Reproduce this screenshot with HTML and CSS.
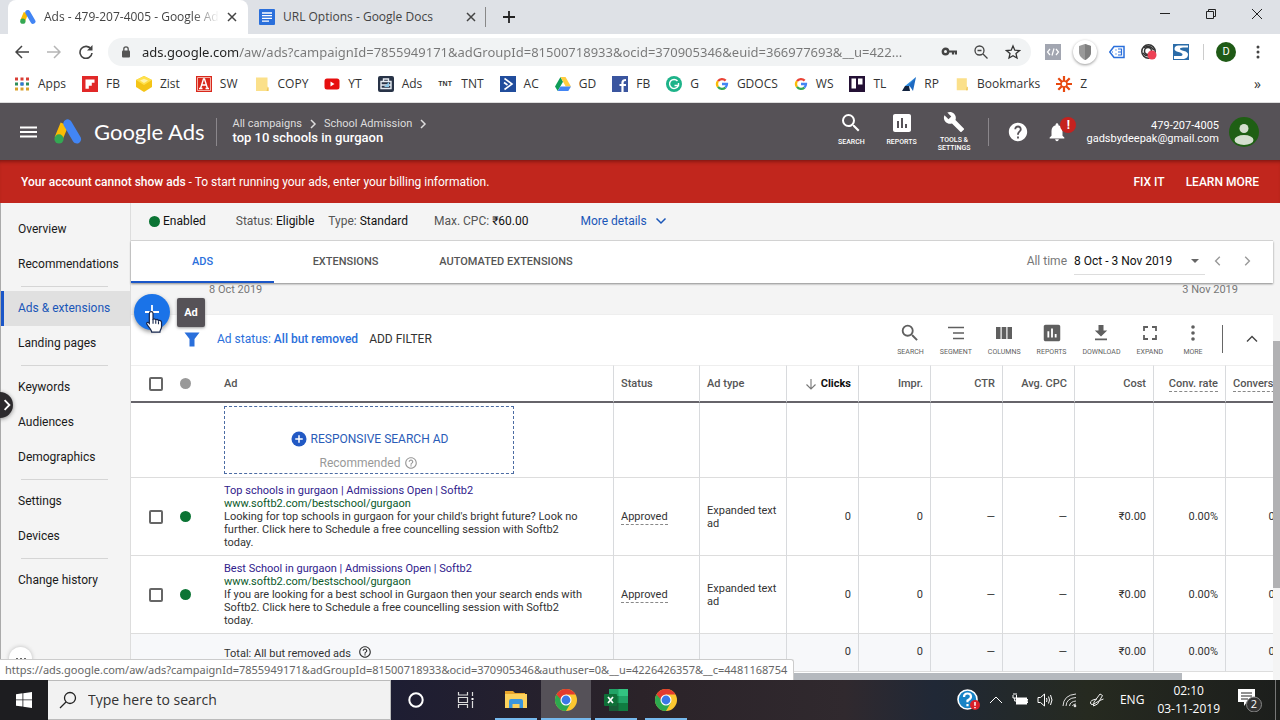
FILE: index.html
```html
<!DOCTYPE html>
<html lang="en">
<head>
<meta charset="utf-8">
<meta name="viewport" content="width=device-width, initial-scale=1">
<title>Ads - 479-207-4005 - Google Ads</title>
<link rel="stylesheet" href="styles.css">
</head>
<body>
<svg class="defs" aria-hidden="true">
  <symbol id="ads-logo" viewBox="0 0 28 25">
    <path d="M10.5 5.2 4.6 19.5" stroke="#fbbc04" stroke-width="8.4"/>
    <path d="M13.6 4.6 22.8 20.2" stroke="#4285f4" stroke-width="8.6" stroke-linecap="round"/>
    <circle cx="5" cy="19.9" r="4.6" fill="#34a853"/>
  </symbol>
  <symbol id="google-g" viewBox="0 0 48 48">
    <path d="M10.2 14.2A17 17 0 0 1 36.5 12.500" fill="none" stroke="#ea4335" stroke-width="8"/>
    <path d="M10.2 33.800A17 17 0 0 1 10.200 14.200" fill="none" stroke="#fbbc05" stroke-width="8"/>
    <path d="M10.200 33.800A17 17 0 0 0 35.500 36.300" fill="none" stroke="#34a853" stroke-width="8"/>
    <path d="M24 24H41A17 17 0 0 1 35.500 36.300" fill="none" stroke="#4285f4" stroke-width="8"/>
  </symbol>
  <symbol id="folder" viewBox="0 0 16 16">
    <path d="M2 1.500h11.500v9l1 1v3.500H2z" fill="#fbe08a"/><path d="M13.500 11.500h1v3.500h-2z" fill="#efc75e"/>
  </symbol>
  <symbol id="chrome" viewBox="0 0 24 24">
    <circle cx="12" cy="12" r="11" fill="#fbc730"/>
    <path d="M12 12 2.470 6.500A11 11 0 0 0 12 23L16.760 14.700z" fill="#2da94f"/>
    <path d="M12 12H7.240L2.470 6.500A11 11 0 0 1 21.530 6.500H12z" fill="#e33b2e"/>
    <circle cx="12" cy="12" r="5.500" fill="#fff"/><circle cx="12" cy="12" r="4.400" fill="#3b78e7"/>
  </symbol>
  <symbol id="help-outline" viewBox="0 0 24 24">
    <path fill="currentColor" d="M11 18h2v-2h-2v2zm1-16C6.480 2 2 6.480 2 12s4.480 10 10 10 10-4.480 10-10S17.520 2 12 2zm0 18c-4.410 0-8-3.590-8-8s3.590-8 8-8 8 3.590 8 8-3.590 8-8 8zm0-14c-2.210 0-4 1.790-4 4h2c0-1.100.9-2 2-2s2 .9 2 2c0 2-3 1.750-3 5h2c0-2.250 3-2.500 3-5 0-2.210-1.790-4-4-4z"/>
  </symbol>
  <symbol id="search" viewBox="0 0 24 24">
    <path fill="currentColor" d="M15.500 14h-.79l-.28-.27A6.470 6.470 0 0 0 16 9.500 6.500 6.500 0 1 0 9.500 16c1.610 0 3.090-.59 4.230-1.570l.27.280v.790l5 4.990L20.490 19l-4.990-5zm-6 0C7.010 14 5 11.990 5 9.500S7.010 5 9.500 5 14 7.010 14 9.500 11.990 14 9.500 14z"/>
  </symbol>
  <symbol id="chart" viewBox="0 0 24 24">
    <path fill="currentColor" d="M19 3H5c-1.100 0-2 .9-2 2v14c0 1.100.9 2 2 2h14c1.100 0 2-.9 2-2V5c0-1.100-.9-2-2-2zM9 17H7v-7h2v7zm4 0h-2V7h2v10zm4 0h-2v-4h2v4z"/>
  </symbol>
  <symbol id="chevron" viewBox="0 0 10 10"><path d="m3 1 4 4-4 4" fill="none" stroke="currentColor" stroke-width="1.500"/></symbol>
  <symbol id="cross" viewBox="0 0 10 10"><path d="m1 1 8 8M9 1 1 9" fill="none" stroke="currentColor" stroke-width="1.500"/></symbol>
</svg>

<header class="browser">
  <div class="tabstrip">
    <div class="tab tab-active">
      <svg class="i16"><use href="#ads-logo"/></svg>
      <span class="tab-title fade">Ads - 479-207-4005 - Google Ads</span>
      <button class="plain" aria-label="Close tab"><svg class="i10"><use href="#cross"/></svg></button>
    </div>
    <div class="tab">
      <svg class="i16" viewBox="0 0 16 16"><rect width="16" height="16" rx="1" fill="#2a6fdb"/><path d="M3 4h10M3 6.700h10M3 9.400h10M3 12.100h7" stroke="#fff" stroke-width="1.300"/></svg>
      <span class="tab-title">URL Options - Google Docs</span>
      <button class="plain" aria-label="Close tab"><svg class="i10"><use href="#cross"/></svg></button>
    </div>
    <button class="plain newtab" aria-label="New tab"><svg class="i12" viewBox="0 0 12 12"><path d="M6 0v12M0 6h12" stroke="#222" stroke-width="1.800"/></svg></button>
    <div class="window-buttons">
      <button class="plain" aria-label="Minimise"><svg class="i12" viewBox="0 0 12 12"><path d="M1 5.500h10" stroke="#222"/></svg></button>
      <button class="plain" aria-label="Restore"><svg class="i12" viewBox="0 0 12 12"><path d="M1.500 3.500h7v7h-7zM3.500 3.500v-2h7v7h-2" fill="none" stroke="#222"/></svg></button>
      <button class="plain" aria-label="Close"><svg class="i12" viewBox="0 0 12 12"><path d="m1 1 10 10M11 1 1 11" stroke="#222"/></svg></button>
    </div>
  </div>

  <div class="navbar">
    <div class="nav-buttons">
      <button class="plain" aria-label="Back"><svg class="i14" viewBox="0 0 14 14"><path d="M14 7H1M7 1 1 7l6 6" fill="none" stroke="#444" stroke-width="1.500"/></svg></button>
      <button class="plain" aria-label="Forward"><svg class="i14" viewBox="0 0 14 14"><path d="M0 7h13M7 1l6 6-6 6" fill="none" stroke="#b5b5b5" stroke-width="1.500"/></svg></button>
      <button class="plain" aria-label="Reload"><svg class="i14" viewBox="0 0 14 14"><path d="M12 4A6 6 0 1 0 13 8" fill="none" stroke="#444" stroke-width="1.600"/><path d="M13.500 0v5.500H8z" fill="#444"/></svg></button>
    </div>
    <div class="omnibox">
      <svg class="i12" viewBox="0 0 12 12"><rect x="2" y="4.500" width="8" height="7" rx="1" fill="#555"/><path d="M3.800 5V3a2.200 2.200 0 0 1 4.400 0v2" fill="none" stroke="#555" stroke-width="1.300"/></svg>
      <input class="url" type="text" aria-label="Address" value="ads.google.com/aw/ads?campaignId=7855949171&amp;adGroupId=81500718933&amp;ocid=370905346&amp;euid=366977693&amp;__u=422...">
      <button class="plain" aria-label="Passwords"><svg class="i16" viewBox="0 0 16 16"><circle cx="4.500" cy="7.500" r="2.700" fill="none" stroke="#444" stroke-width="2.400"/><path d="M7 7.500h8v3M12 7.500v3" fill="none" stroke="#444" stroke-width="2.200"/></svg></button>
      <button class="plain" aria-label="Zoom"><svg class="i16" viewBox="0 0 16 16"><circle cx="6.500" cy="6.500" r="4.500" fill="none" stroke="#444" stroke-width="1.300"/><path d="m10 10 4.500 4.500M4.500 6.500h4" stroke="#444" stroke-width="1.300"/></svg></button>
      <button class="plain" aria-label="Bookmark this page"><svg class="i16" viewBox="0 0 16 16"><path d="m8 2 1.800 4.200 4.700.4-3.500 3 1 4.400-4-2.300L4 14l1-4.400-3.500-3 4.700-.4z" fill="none" stroke="#333" stroke-width="1.300"/></svg></button>
    </div>
    <div class="extensions">
      <svg class="i16" viewBox="0 0 16 16"><rect width="16" height="16" fill="#a2a6b1"/><path d="M5 5 2.500 8 5 11M11 5l2.500 3L11 11M9 4.500l-2 7" fill="none" stroke="#fff" stroke-width="1.200"/></svg>
      <span class="shield"><svg class="i16" viewBox="0 0 16 16"><path d="m8 0 6 2v6c0 4-3 6.500-6 8-3-1.500-6-4-6-8V2z" fill="#999"/><path d="m8 0 6 2v6c0 4-3 6.500-6 8z" fill="#7f7f7f"/></svg></span>
      <svg class="i16" viewBox="0 0 16 16"><path d="M5 2.500h10v11H5L.8 8z" fill="#fff" stroke="#2a6fdb" stroke-width="1.500"/><path d="M7 5.500v1M7 9.500v1M9 5h3.500v6H9M9 8h3.500M3 8h1" fill="none" stroke="#2a6fdb" stroke-width="1.200"/></svg>
      <svg class="i16" viewBox="0 0 16 16"><g fill="none" stroke="#333" stroke-width="1.500"><circle cx="7.500" cy="7.500" r="6.700"/><circle cx="7" cy="7" r="3.500"/><path d="M3 4q5-4 10 2M2 9q3 4 7 2"/></g><circle cx="11" cy="11" r="4.500" fill="#ee4155"/></svg>
      <svg class="i16" viewBox="0 0 16 16"><rect width="16" height="16" fill="#2b6ca8"/><path d="M15 1.500H5.500Q1.500 1.500 1.500 5q0 2 4 3t4 2.500q0 1.500-3 1.500H1v3h10q4-1 4-4.500 0-2.500-4-3.500T7 5q0-1.500 3-1.500h5z" fill="#fff"/></svg>
      <span class="bar"></span>
      <button class="profile" aria-label="Profile">D</button>
      <button class="plain" aria-label="Menu"><svg class="i16" viewBox="0 0 16 16"><g fill="#444"><circle cx="8" cy="3" r="1.500"/><circle cx="8" cy="8" r="1.500"/><circle cx="8" cy="13" r="1.500"/></g></svg></button>
    </div>
  </div>

  <nav class="bookmarks" aria-label="Bookmarks">
    <a href="#"><svg class="i16" viewBox="0 0 16 16"><path d="M1 3h14" stroke="#d93e35" stroke-width="3" stroke-dasharray="3 2.500"/><path d="M1 8h14" stroke="#2f8e5b" stroke-width="3" stroke-dasharray="3 2.500"/><path d="M1 13h14" stroke="#d9a12c" stroke-width="3" stroke-dasharray="3 2.500"/><path d="M6.500 6.500h3v3h-3z" fill="#3273dc"/></svg>Apps</a>
    <a href="#"><svg class="i16" viewBox="0 0 16 16"><path d="M0 0h16v16H0z" fill="#e12828"/><path d="M3.500 3.500h9v3.200H9.800v3H6.800v3H3.500z" fill="#fff"/></svg>FB</a>
    <a href="#"><svg class="i16" viewBox="0 0 16 16"><path d="m8 0 8 4v7l-8 5-8-5V4z" fill="#f4c416"/><path d="m8 0 8 4-8 5-8-5z" fill="#ffe04a"/><path d="m4 4.500 4-1.800 4 1.800-4 2.500z" fill="#fff4ae"/></svg>Zist</a>
    <a href="#"><svg class="i16" viewBox="0 0 16 16"><path d="M0 0h16v16H0z" fill="#d9281c"/><path d="M1.500 1.500h13v13h-13z" fill="none" stroke="#f3b1a5"/><path d="m4.500 12.500 3-9.500h1l3 9.500M3 12.500h3.500m3 0H13M5.500 9h5" fill="none" stroke="#fff" stroke-width="1.400"/></svg>SW</a>
    <a href="#"><svg class="i16"><use href="#folder"/></svg>COPY</a>
    <a href="#"><svg class="i16" viewBox="0 0 16 16"><rect y="2.500" x=".5" width="15" height="11" rx="2.500" fill="#e60f0f"/><path d="m6.500 5.500 4 2.500-4 2.500z" fill="#fff"/></svg>YT</a>
    <a href="#"><svg class="i16" viewBox="0 0 16 16"><rect width="16" height="16" rx="2" fill="#283347"/><path d="M3 5.500h10v7H3zM5.500 5V3h5v2M3 9h10" fill="none" stroke="#e6ecf3" stroke-width="1.400"/><path d="m6 11 5-5v5z" fill="#8dc7e8"/></svg>Ads</a>
    <a href="#"><span class="tnt">TNT</span>TNT</a>
    <a href="#"><svg class="i16" viewBox="0 0 16 16"><path d="M0 0h16v16H0z" fill="#214d9c"/><path d="m4.500 2.500 7.500 5.500-7.500 5.500M4 6.500 7.500 9" fill="none" stroke="#fff" stroke-width="1.600"/></svg>AC</a>
    <a href="#"><svg class="i16" viewBox="0 0 16 16"><path d="M5.500 1 0 10.500l2.700 4.500L8 5.700z" fill="#0f9d58"/><path d="M5.500 1h5L16 10.500h-5.300z" fill="#ffcd40"/><path d="M16 10.500H5.500L2.700 15h10.600z" fill="#4285f4"/></svg>GD</a>
    <a href="#"><svg class="i16" viewBox="0 0 16 16"><path d="M0 0h16v16H0z" fill="#3a559f"/><path d="M10.500 16V6.500Q10.500 4 14 4M7.500 9H14" fill="none" stroke="#fff" stroke-width="2.200"/></svg>FB</a>
    <a href="#"><svg class="i16" viewBox="0 0 16 16"><circle cx="8" cy="8" r="8" fill="#1db389"/><path d="M11.500 5A4.500 4.500 0 1 0 12.300 9.500H8.500M12.500 7v3.500" fill="none" stroke="#fff" stroke-width="1.400"/></svg>G</a>
    <a href="#"><svg class="i14"><use href="#google-g"/></svg>GDOCS</a>
    <a href="#"><svg class="i14"><use href="#google-g"/></svg>WS</a>
    <a href="#"><svg class="i16" viewBox="0 0 16 16"><path d="M0 0h16v16H0z" fill="#241135"/><path d="M2.500 2.500h4.500v10H2.500zM9 2.500h4.500v6H9z" fill="#fff"/></svg>TL</a>
    <a href="#"><svg class="i14" viewBox="0 0 14 14"><path d="M14 0 3 9l4 1z" fill="#2a8be0"/><path d="M14 0 7 8l4 6z" fill="#1d69c1"/><path d="M3 9 0 14h8l-1-5z" fill="#12233f"/></svg>RP</a>
    <a href="#"><svg class="i14"><use href="#folder"/></svg>Bookmarks</a>
    <a href="#"><svg class="i16" viewBox="0 0 16 16"><path d="M8 0v5M8 11v5M0 8h5M11 8h5M2.300 2.300l3.500 3.500M10.200 10.200l3.500 3.500M13.700 2.300l-3.500 3.500M5.800 10.200l-3.500 3.500" stroke="#e8490f" stroke-width="2.200"/><circle cx="8" cy="8" r="3" fill="none" stroke="#e8490f" stroke-width="1.500"/></svg>Z</a>
    <button class="plain more-bookmarks" aria-label="More bookmarks">»</button>
  </nav>
</header>

<header class="app-header">
  <button class="plain" aria-label="Main menu"><svg class="burger" viewBox="0 0 17 12"><path d="M0 1.500h17M0 6h17M0 10.500h17" stroke="#fff" stroke-width="2"/></svg></button>
  <a class="brand" href="#"><svg class="brand-logo"><use href="#ads-logo"/></svg>Google Ads</a>
  <nav class="crumbs" aria-label="Breadcrumb">
    <div class="crumb-row"><a href="#">All campaigns</a><svg class="i10"><use href="#chevron"/></svg><a href="#">School Admission</a><svg class="i10"><use href="#chevron"/></svg></div>
    <strong>top 10 schools in gurgaon</strong>
  </nav>
  <div class="header-tools">
    <button class="tool"><svg class="i24"><use href="#search"/></svg>SEARCH</button>
    <button class="tool"><svg class="i24"><use href="#chart"/></svg>REPORTS</button>
    <button class="tool"><svg class="i22" viewBox="0 0 24 24"><path fill="#fff" d="m22.700 19-9.100-9.100c.9-2.300.4-5-1.500-6.900-2-2-5-2.400-7.400-1.300L9 6 6 9 1.600 4.700C.4 7.100.9 10.100 2.900 12.100c1.900 1.900 4.600 2.400 6.900 1.500l9.100 9.100c.4.400 1 .4 1.400 0l2.300-2.300c.5-.4.500-1.100.1-1.400z"/></svg>TOOLS &amp;<br>SETTINGS</button>
  </div>
  <div class="header-account">
    <button class="plain" aria-label="Help"><svg class="i22" viewBox="0 0 24 24"><path fill="#fff" d="M12 2C6.480 2 2 6.480 2 12s4.480 10 10 10 10-4.480 10-10S17.520 2 12 2zm1 17h-2v-2h2v2zm2.070-7.750-.9.920C13.450 12.900 13 13.500 13 15h-2v-.5c0-1.100.45-2.100 1.170-2.830l1.240-1.260c.37-.36.59-.86.59-1.410 0-1.100-.9-2-2-2s-2 .9-2 2H8c0-2.210 1.790-4 4-4s4 1.790 4 4c0 .88-.36 1.680-.93 2.250z"/></svg></button>
    <button class="plain bell" aria-label="Notifications"><svg class="i22" viewBox="0 0 24 24"><path fill="#fff" d="M12 22c1.100 0 2-.9 2-2h-4c0 1.100.9 2 2 2zm6-6v-5c0-3.070-1.640-5.640-4.500-6.320V4c0-.83-.67-1.500-1.500-1.500s-1.500.67-1.500 1.500v.680C7.630 5.360 6 7.920 6 11v5l-2 2v1h16v-1l-2-2z"/></svg><span class="badge">!</span></button>
    <div class="account"><span>479-207-4005</span><span>gadsbydeepak@gmail.com</span></div>
    <svg class="avatar" viewBox="0 0 30 30"><circle cx="15" cy="15" r="15" fill="#1f5f14"/><circle cx="15" cy="11.500" r="4.500" fill="#d4dfce"/><ellipse cx="15" cy="23" rx="9.500" ry="5" fill="#d4dfce"/></svg>
  </div>
</header>

<section class="alert">
  <p><b>Your account cannot show ads</b> - To start running your ads, enter your billing information.</p>
  <a href="#">FIX IT</a><a href="#">LEARN MORE</a>
</section>

<div class="workspace">
  <nav class="sidebar" aria-label="Sections">
    <a href="#">Overview</a><a href="#">Recommendations</a><hr>
    <a href="#" class="current">Ads &amp; extensions</a><a href="#">Landing pages</a><hr>
    <a href="#">Keywords</a><a href="#">Audiences</a><a href="#">Demographics</a><hr>
    <a href="#">Settings</a><a href="#">Devices</a><hr>
    <a href="#">Change history</a>
    <button class="expander" aria-label="Expand navigation"><svg class="i12" viewBox="0 0 10 10"><path d="m3 1 4 4-4 4" fill="none" stroke="#fff" stroke-width="1.500"/></svg></button>
    <button class="dots" aria-label="More"><svg class="i12" viewBox="0 0 12 12"><g fill="#333"><circle cx="2" cy="6" r="1"/><circle cx="6" cy="6" r="1"/><circle cx="10" cy="6" r="1"/></g></svg></button>
  </nav>

  <main class="main">
    <div class="status-row">
      <span class="enabled"><i class="dot"></i>Enabled</span>
      <span class="st-status">Status: <b>Eligible</b></span>
      <span class="st-type">Type: <b>Standard</b></span>
      <span class="st-cpc">Max. CPC: <b>₹60.00</b></span>
      <a href="#">More details<svg class="i12" viewBox="0 0 12 12"><path d="m1.500 3.500 4.500 4.500 4.500-4.500" fill="none" stroke="currentColor" stroke-width="1.500"/></svg></a>
    </div>
    <div class="view-tabs">
      <button class="view-tab selected">ADS</button>
      <button class="view-tab">EXTENSIONS</button>
      <button class="view-tab auto">AUTOMATED EXTENSIONS</button>
      <div class="range">
        <label for="range">All time</label>
        <span class="range-select"><select id="range"><option>8 Oct - 3 Nov 2019</option></select><svg class="i10" viewBox="0 0 10 10"><path d="M1 3h8L5 7z" fill="#666"/></svg></span>
        <button class="plain" aria-label="Previous period"><svg class="i14 flip" viewBox="0 0 10 10"><path d="m3 2 3 3-3 3" fill="none" stroke="#999"/></svg></button>
        <button class="plain" aria-label="Next period"><svg class="i14" viewBox="0 0 10 10"><path d="m3 2 3 3-3 3" fill="none" stroke="#999"/></svg></button>
      </div>
    </div>
    <div class="chart-axis"><span>8 Oct 2019</span><span>3 Nov 2019</span></div>

    <section class="card">
      <div class="filter-bar">
        <svg class="i16" viewBox="0 0 16 16"><path d="M.5 1.500h15L10.500 8v7.500h-5V8z" fill="#2a6fdb"/></svg>
        <button class="plain filter">Ad status: <b>All but removed</b></button>
        <button class="plain add-filter">ADD FILTER</button>
        <div class="table-tools">
          <button class="mini"><svg class="i22"><use href="#search"/></svg>SEARCH</button>
          <button class="mini"><svg class="i22" viewBox="0 0 22 22"><path d="M3 5.500h16M8 11h11M8 16.500h11" stroke="#5f5f5f" stroke-width="1.700"/></svg>SEGMENT</button>
          <button class="mini"><svg class="i22" viewBox="0 0 22 22"><path d="M3 5h4.500v12H3zM8.700 5h4.600v12H8.700zM14.500 5H19v12h-4.500z" fill="#5f5f5f"/></svg>COLUMNS</button>
          <button class="mini"><svg class="i22"><use href="#chart"/></svg>REPORTS</button>
          <button class="mini"><svg class="i22" viewBox="0 0 22 22"><path d="M8.500 3h5v5.500h3.700L11 14.500l-6.200-6h3.700zM5 16.500h12v1.700H5z" fill="#5f5f5f"/></svg>DOWNLOAD</button>
          <button class="mini"><svg class="i22" viewBox="0 0 22 22"><path d="M5 9V5h4M13 5h4v4M17 13v4h-4M9 17H5v-4" fill="none" stroke="#5f5f5f" stroke-width="1.800"/></svg>EXPAND</button>
          <button class="mini more"><svg class="i22" viewBox="0 0 22 22"><g fill="#5f5f5f"><circle cx="11" cy="5" r="1.800"/><circle cx="11" cy="11" r="1.800"/><circle cx="11" cy="17" r="1.800"/></g></svg>MORE</button>
        </div>
        <button class="collapse" aria-label="Collapse"><svg class="i12" viewBox="0 0 12 12"><path d="m1 8.500 5-5 5 5" fill="none" stroke="#444" stroke-width="1.400"/></svg></button>
      </div>

      <table class="ads">
        <colgroup><col class="c-check"><col class="c-dot"><col><col class="c-status"><col class="c-type"><col class="c-num"><col class="c-num"><col class="c-num"><col class="c-num"><col class="c-cost"><col class="c-num"><col class="c-num"></colgroup>
        <thead>
          <tr><th><input type="checkbox" aria-label="Select all"></th><th class="nb"><i class="dot grey"></i></th><th class="nb ad">Ad</th><th>Status</th><th>Ad type</th><th class="n sorted"><svg class="i12" viewBox="0 0 12 12"><path d="M6 1v10M1.500 6.500 6 11l4.500-4.500" fill="none" stroke="#777" stroke-width="1.100"/></svg>Clicks</th><th class="n">Impr.</th><th class="n">CTR</th><th class="n">Avg. CPC</th><th class="n">Cost</th><th class="n"><span class="hint">Conv. rate</span></th><th class="n"><span class="hint">Conversions</span></th></tr>
        </thead>
        <tbody>
          <tr class="suggest"><td></td><td class="nb"></td><td class="nb ad"><div class="suggestion"><button class="plain rsa"><svg class="i18" viewBox="0 0 24 24"><circle cx="12" cy="12" r="10" fill="#2259c4"/><path d="M12 7v10M7 12h10" stroke="#fff" stroke-width="2"/></svg>RESPONSIVE SEARCH AD</button><span class="rec">Recommended <svg class="i14"><use href="#help-outline"/></svg></span></div></td><td></td><td></td><td></td><td></td><td></td><td></td><td></td><td></td><td></td></tr>
          <tr class="item"><td><input type="checkbox" aria-label="Select Top schools in gurgaon"></td><td class="nb"><i class="dot"></i></td><td class="nb ad"><a href="#">Top schools in gurgaon | Admissions Open | Softb2</a><span class="site">www.softb2.com/bestschool/gurgaon</span>Looking for top schools in gurgaon for your child's bright future? Look no further. Click here to Schedule a free councelling session with Softb2 today.</td><td><span class="hint">Approved</span></td><td>Expanded text ad</td><td class="n">0</td><td class="n">0</td><td class="n">—</td><td class="n">—</td><td class="n">₹0.00</td><td class="n">0.00%</td><td class="n">0.00</td></tr>
          <tr class="item"><td><input type="checkbox" aria-label="Select Best School in gurgaon"></td><td class="nb"><i class="dot"></i></td><td class="nb ad"><a href="#">Best School in gurgaon | Admissions Open | Softb2</a><span class="site">www.softb2.com/bestschool/gurgaon</span>If you are looking for a best school in Gurgaon then your search ends with Softb2. Click here to Schedule a free councelling session with Softb2 today.</td><td><span class="hint">Approved</span></td><td>Expanded text ad</td><td class="n">0</td><td class="n">0</td><td class="n">—</td><td class="n">—</td><td class="n">₹0.00</td><td class="n">0.00%</td><td class="n">0.00</td></tr>
        </tbody>
        <tfoot>
          <tr><td></td><td class="nb"></td><td class="nb ad total">Total: All but removed ads <svg class="i14"><use href="#help-outline"/></svg></td><td></td><td></td><td class="n">0</td><td class="n">0</td><td class="n">—</td><td class="n">—</td><td class="n">₹0.00</td><td class="n">0.00%</td><td class="n">0.00</td></tr>
        </tfoot>
      </table>
      <div class="h-scroll"><span></span></div>
    </section>
    <button class="fab" aria-label="New ad"><svg class="i14" viewBox="0 0 14 14"><path d="M7 0v14M0 7h14" stroke="#fff" stroke-width="1.800"/></svg></button>
    <span class="tip">Ad</span>
    <svg class="pointer" viewBox="0 0 18 22"><path d="M5.500 1.500c1 0 1.700.7 1.700 1.700v5.300c.8-.5 2-.3 2.500.5.900-.5 2-.2 2.500.7 1-.5 2.800 0 2.800 1.600v4c0 2-1.500 3.200-1.500 5H6c0-2-3-4.800-4.500-7.300-.8-1.300 1-2.500 2.300-.8V3.200c0-1 .7-1.700 1.700-1.700z" fill="#fff" stroke="#16264d" stroke-width="1.100"/><path d="M9.700 9.500v3M12.200 10.200V13M7.200 8.500v4" stroke="#16264d"/></svg>
  </main>
  <div class="v-scroll"><span></span></div>
  <div class="link-status">https://ads.google.com/aw/ads?campaignId=7855949171&amp;adGroupId=81500718933&amp;ocid=370905346&amp;authuser=0&amp;__u=4226426357&amp;__c=4481168754</div>
</div>

<footer class="taskbar">
  <button class="start" aria-label="Start"><svg class="i16" viewBox="0 0 16 16"><path d="M0 2.300 6.500 1.300v6.200H0zM7.300 1.200 16 0v7.500H7.300zM0 8.300h6.500v6.300L0 13.700zM7.300 8.300H16V16l-8.700-1.200z" fill="#fff"/></svg></button>
  <div class="task-search"><svg class="i18" viewBox="0 0 18 18"><circle cx="11" cy="7" r="5.500" fill="none" stroke="#222" stroke-width="1.300"/><path d="m7 11-6 6" stroke="#222" stroke-width="1.300"/></svg><input type="text" aria-label="Search Windows" placeholder="Type here to search"></div>
  <button class="task" aria-label="Cortana"><svg class="i16" viewBox="0 0 16 16"><circle cx="8" cy="8" r="6.700" fill="none" stroke="#fff" stroke-width="2"/></svg></button>
  <button class="task" aria-label="Task view"><svg class="i18" viewBox="0 0 18 18"><path d="M1.500 1v3h9V1M1.500 17v-3.500h9V17M1.500 6.500h9v5h-9zM15.500 1v4M15.500 10v7" fill="none" stroke="#ddd" stroke-width="1.200"/><path d="M14.500 7h2v2h-2z" fill="#fff"/></svg></button>
  <button class="task open" aria-label="File Explorer"><svg class="i22" viewBox="0 0 22 22"><path d="M0 2h8l2 2h10v4H0z" fill="#e8a52b"/><path d="M0 5h22v14H0z" fill="#fcd25c"/><path d="M4 19v-7q0-2 2-2h10q2 0 2 2v7h-3.500v-4h-7v4z" fill="#3a96dd"/></svg></button>
  <button class="task open active" aria-label="Chrome"><svg class="i24"><use href="#chrome"/></svg></button>
  <button class="task open" aria-label="Excel"><svg class="i24" viewBox="0 0 24 24"><path d="M5 1h19v22H5z" fill="#21a366"/><path d="M14.500 1H24v7h-9.500z" fill="#33c481"/><path d="M5 8h9.500v7H5zM5 15h19v8H5z" fill="#107c41"/><path d="M5 15h9.500v8H5z" fill="#185c37"/><rect y="6" width="13" height="12" rx="1" fill="#0f7038"/><path d="m4 9 5 6M9 9l-5 6" stroke="#fff" stroke-width="1.700"/></svg></button>
  <button class="task open" aria-label="Chrome, second profile"><svg class="i24"><use href="#chrome"/></svg></button>
  <div class="tray">
    <svg class="i24" viewBox="0 0 24 24"><circle cx="11.500" cy="11.500" r="9.500" fill="#1783c6" stroke="#fff" stroke-width="1.600"/><path d="M8 9q0-3.500 3.500-3.500T15 8.800q0 2-3.500 3.700v1.800M11.500 16v2.200" fill="none" stroke="#fff" stroke-width="2.200"/><circle cx="19" cy="17" r="5" fill="#d9202a"/><path d="M19 14v3.800M19 19v1.300" stroke="#fff" stroke-width="1.500"/></svg>
    <svg class="i14" viewBox="0 0 14 14"><path d="m1 10 6-6 6 6" fill="none" stroke="#fff"/></svg>
    <svg class="i16" viewBox="0 0 16 16"><path d="M4 5.500h11v7H4z" fill="#fff"/><path d="M15 7.500h1v3h-1zM1 3v3h3.500V3M2 3V1M4 3V1M2.700 6v3h2" fill="none" stroke="#fff"/></svg>
    <svg class="i16" viewBox="0 0 16 16"><path d="M1 5.500h2.500l4-3.500v12l-4-3.500H1zM9.500 6q1 2 0 4M11.500 4.500q2 3.500 0 7M13.500 3q3 5 0 10" fill="none" stroke="#fff"/></svg>
    <svg class="i16" viewBox="0 0 16 16"><path d="M1 14Q1.500 3 14 2M4 14Q4.500 6 14 5.500M7.500 14Q8 9.500 14 9M10.500 14q.5-2 3.500-2" fill="none" stroke="#ddd"/><circle cx="13" cy="14" r="1.300" fill="#ddd"/></svg>
    <svg class="i16 pen" viewBox="0 0 16 16"><path d="m5 10 6-8 2.500 1.500-5 8.500-4 2zM8 7Q1 8 1.500 11t5 0 8-4" fill="none" stroke="#eee"/></svg>
    <span class="lang">ENG</span>
    <span class="clock"><span>02:10</span><span>03-11-2019</span></span>
    <button class="plain notes" aria-label="Notifications"><svg class="i24" viewBox="0 0 24 24"><path d="M0 1h17v13H9l-3 4v-4H0z" fill="#fff"/><path d="M3 5h11M3 8h11M3 11h7" stroke="#222"/><circle cx="16" cy="16.500" r="7.500" fill="#333" stroke="#888"/></svg><span>2</span></button>
  </div>
</footer>
</body>
</html>
```
FILE: styles.css
```css
* { box-sizing: border-box; }
html, body { height: 100%; }
body {
  margin: 0;
  display: flex;
  flex-direction: column;
  overflow: hidden;
  font: 12px/16px Roboto, sans-serif;
  color: #222;
  background: #fff;
}
a { color: inherit; text-decoration: none; }
button, input, select { font: inherit; color: inherit; border: 0; padding: 0; margin: 0; background: none; outline: 0; }
svg { flex: none; display: block; }
.defs { width: 0; height: 0; position: absolute; }
.plain { display: flex; align-items: center; white-space: nowrap; }
.i10 { width: 10px; height: 10px; }
.i12 { width: 12px; height: 12px; }
.i14 { width: 14px; height: 14px; }
.i16 { width: 16px; height: 16px; }
.i18 { width: 18px; height: 18px; }
.i22 { width: 22px; height: 22px; }
.i24 { width: 24px; height: 24px; }
.flip { transform: scaleX(-1); }

/* Browser frame */
.browser, .taskbar { font-family: "Open Sans", "Noto Sans", sans-serif; }
.browser { flex: none; border-bottom: 1px solid #ddd; }
.tabstrip { display: flex; height: 34px; background: #dee1e6; padding-left: 8px; }
.tab { display: flex; align-items: center; gap: 8px; width: 238px; padding: 0 9px 0 11px; font-size: 12px; color: #444; border-right: 1px solid #888; border-image: linear-gradient(transparent 22%, #888 22% 78%, transparent 78%) 1; }
.tab-active { width: 240px; padding: 0 11px 0 12px; background: #fff; border: 0; border-radius: 8px 8px 0 0; }
.tab-title { flex: 1; overflow: hidden; white-space: nowrap; }
.fade { mask-image: linear-gradient(90deg, #000 85%, transparent); }
.newtab { padding: 0 17px; }
.window-buttons { display: flex; align-items: center; margin-left: auto; gap: 34px; padding: 0 17px 6px 0; }
.navbar { display: flex; align-items: center; height: 36px; padding: 0 14px; }
.nav-buttons { display: flex; gap: 18px; width: 94px; padding-left: 1px; }
.omnibox { flex: 1; display: flex; align-items: center; gap: 16px; height: 28px; padding: 0 10px 0 12px; border-radius: 14px; background: #f1f3f4; }
.url { flex: 1; min-width: 0; margin: 0 -4px 0 -6px; font-family: "Noto Sans", sans-serif; font-size: 13px; background: linear-gradient(90deg, #222 96px, #777 96px); background-clip: text; -webkit-text-fill-color: transparent; }
.extensions { display: flex; align-items: center; gap: 16px; padding-left: 14px; }
.shield { display: grid; place-items: center; width: 24px; height: 24px; margin: 0 -4px; border-radius: 50%; box-shadow: 0 1px 3px #999; }
.bar { width: 1px; height: 16px; background: #ccc; margin: 0 -4px 0 -2px; }
.profile { width: 20px; height: 20px; margin-right: -2px; border-radius: 50%; background: #1f5a16; color: #fff; font: 11px/20px Roboto, sans-serif; }
.bookmarks { display: flex; align-items: center; gap: 16px; height: 32px; padding: 0 19px 4px 14px; font-size: 12px; color: #333; }
.bookmarks a { display: flex; align-items: center; gap: 8px; }
.tnt { font: bold 7px/16px "Liberation Sans", sans-serif; width: 15px; }
.more-bookmarks { margin-left: auto; font-size: 14px; }

/* Google Ads header */
.app-header { flex: none; display: flex; align-items: center; height: 57px; padding: 0 21px 0 20px; background: #565257; color: #fff; }
.burger { width: 17px; height: 12px; }
.brand { display: flex; align-items: center; gap: 12px; margin-left: 17px; padding-right: 12px; font: 22px/28px Lato, sans-serif; border-right: 1px solid #8b878c; }
.brand-logo { width: 28px; height: 25px; }
.crumbs { padding-left: 15px; line-height: 14px; font-size: 11px; }
.crumb-row { display: flex; align-items: center; gap: 6px; color: #ddd; }
.crumbs strong { font-size: 13px; font-weight: 500; }
.header-tools { display: flex; align-items: flex-start; gap: 21px; height: 42px; margin-left: auto; }
.tool { display: flex; flex-direction: column; align-items: center; font-size: 7px; line-height: 8px; font-weight: 500; gap: 3px; min-width: 28px; }
.header-account { display: flex; align-items: center; height: 28px; padding-left: 18px; margin-left: 18px; border-left: 1px solid #8b878c; }
.bell { position: relative; margin-left: 17px; }
.badge { position: absolute; left: 14px; top: -4px; width: 16px; height: 16px; border-radius: 50%; background: #c5221f; font: bold 12px/16px Roboto, sans-serif; text-align: center; }
.account { display: flex; flex-direction: column; align-items: flex-end; margin: 0 10px 0 18px; font-size: 11px; line-height: 13px; }
.avatar { width: 30px; height: 30px; }

.alert { flex: none; display: flex; align-items: center; gap: 21px; height: 43px; padding: 0 21px; background: #c1261d; color: #fff; box-shadow: inset 0 4px 4px -3px #6d130e; }
.alert p { flex: 1; margin: 0; }
.alert b, .alert a { font-weight: 500; }

/* Workspace */
.workspace { position: relative; flex: 1; min-height: 0; display: flex; background: #f4f4f4; }
.sidebar { position: relative; flex: none; width: 131px; padding-top: 9px; border-left: 1px solid #aaa; border-right: 1px solid #ddd; color: #1a1a1a; }
.sidebar a { display: block; height: 35px; line-height: 35px; padding-left: 17px; }
.sidebar .current { background: #e0e0e0; color: #1a56b8; box-shadow: inset 3px 0 #1a56c8; }
.sidebar hr { height: 1px; margin: 4px 22px 4px 20px; border: 0; background: #d5d5d5; }
.expander { position: absolute; left: -14px; top: 189px; width: 26px; height: 26px; border-radius: 50%; background: #2c2a2d; box-shadow: 0 1px 4px #888; display: grid; place-items: center end; }
.dots { position: absolute; left: 8px; bottom: 10px; width: 23px; height: 23px; border-radius: 50%; background: #fff; box-shadow: 0 0 4px #bbb; display: grid; place-items: center; }

.main { position: relative; flex: 1; min-width: 0; display: flex; flex-direction: column; }
.status-row { flex: none; display: flex; align-items: center; height: 38px; padding: 0 18px 1px; border-bottom: 1px solid #d8d8d8; color: #555; }
.status-row b { font-weight: 400; color: #111; }
.status-row a { display: flex; align-items: center; gap: 8px; color: #1a56b8; }
.dot { display: block; width: 11px; height: 11px; border-radius: 50%; background: #0b7434; }
.grey { background: #999; }
.enabled { display: flex; align-items: center; gap: 3px; color: #111; margin-right: 30px; }
.st-status { margin-right: 14px; }
.st-type { margin-right: 26px; }
.st-cpc { margin-right: 52px; }
.view-tabs { flex: none; display: flex; height: 42px; background: #fff; box-shadow: 0 1px 2px #888; z-index: 1; }
.view-tab { width: 143px; font-size: 11px; font-weight: 500; color: #555; }
.auto { width: 178px; }
.selected { color: #2a6fdb; border-bottom: 2px solid #1a56c8; border-top: 2px solid transparent; }
.range { display: flex; align-items: center; gap: 7px; margin-left: auto; padding: 0 18px 2px 0; color: #777; }
.range-select { display: flex; align-items: center; width: 131px; height: 28px; padding-right: 5px; border-bottom: 1px solid #ddd; margin-right: -2px; }
.range select { appearance: none; flex: 1; min-width: 0; color: #111; }
.range button + button { margin-left: 10px; }
.chart-axis { flex: none; display: flex; justify-content: space-between; height: 31px; padding: 0 35px 0 78px; font-size: 11px; line-height: 14px; color: #777; }
.card { flex: 1; min-height: 0; display: flex; flex-direction: column; overflow: hidden; background: #fff; border-top: 1px solid #eee; }
.filter-bar { flex: none; display: flex; align-items: center; height: 50px; padding: 0 0 2px 53px; color: #2a6fdb; }
.filter { gap: 3px; margin-left: 17px; }
.filter b { font-weight: 500; }
.add-filter { margin-left: 11px; color: #333; }
.table-tools { display: flex; gap: 16px; margin-left: auto; }
.mini { display: flex; flex-direction: column; align-items: center; gap: 3px; font-size: 7px; line-height: 10px; color: #5f5f5f; }
.more { margin-left: 3px; }
.collapse { display: grid; place-items: center; width: 51px; height: 28px; padding-left: 8px; margin-left: 18px; border-left: 1px solid #666; }

.ads { flex: none; width: calc(100% + 24px); table-layout: fixed; border-collapse: separate; border-spacing: 0; font-size: 11px; line-height: 13px; color: #333; }
.c-check { width: 49px; }
.c-dot { width: 44px; }
.c-status { width: 86px; }
.c-type { width: 87px; }
.c-num { width: 72px; }
.c-cost { width: 79px; }
.ads th, .ads td { text-align: left; border-left: 1px solid #d8dadd; padding: 0 7px; font-weight: 400; }
.ads .nb, .ads tr > :first-child { border-left: 0; }
.ads tr > :first-child { padding-left: 18px; }
.ads .nb { padding: 0; }
.ads .n { text-align: right; white-space: nowrap; }
.ads th { height: 38px; border-top: 1px solid #eee; border-bottom: 2px solid #66646a; font-weight: 500; color: #555; }
.ads .sorted { color: #111; font-weight: 700; }
.sorted svg { display: inline-block; vertical-align: -3px; margin-right: 4px; }
.ads td { border-bottom: 1px solid #ddd; }
.ads .ad { padding-right: 30px; }
.ads input { appearance: none; display: block; width: 14px; height: 14px; border: 2px solid #666; border-radius: 2px; }
.hint { border-bottom: 1px dashed #888; padding-bottom: 1px; }
.suggest td { height: 75px; }
.suggestion { display: flex; flex-direction: column; align-items: center; justify-content: flex-end; width: 290px; height: 68px; border: 1px dashed #4b6ba3; padding-bottom: 2px; gap: 7px; }
.rsa { gap: 3px; font-size: 12px; color: #2a5cb8; }
.rec { display: flex; align-items: center; gap: 4px; font-size: 12px; line-height: 16px; color: #999; }
.item td { height: 78px; }
.item .ad a { display: block; color: #30218c; }
.site { display: block; color: #0b5a2a; }
.ads tfoot td { height: 38px; background: #f7f8fa; padding-bottom: 2px; }
.total svg { display: inline-block; vertical-align: -2px; margin-left: 4px; }
.h-scroll { height: 8px; padding-top: 1px; }
.h-scroll span { display: block; width: 92%; height: 7px; background: #b5b9be; }
.v-scroll { flex: none; width: 7px; padding-top: 138px; }
.v-scroll span { display: block; height: 73%; background: #b1b1b3; }

.fab { position: absolute; left: 3px; top: 91px; width: 36px; height: 36px; border-radius: 50%; background: #1a73e8; box-shadow: 0 2px 4px #999; display: grid; place-items: center; z-index: 2; }
.tip { position: absolute; left: 46px; top: 95px; width: 28px; height: 29px; border-radius: 2px; background: #565257; color: #fff; font-size: 11px; font-weight: 700; line-height: 29px; text-align: center; box-shadow: 0 1px 3px #999; z-index: 2; }
.pointer { position: absolute; left: 14px; top: 107px; width: 20px; height: 24px; z-index: 3; }
.link-status { position: absolute; left: 0; bottom: 0; z-index: 4; padding: 0 6px 0 5px; background: #fff; border: 1px solid #ccc; border-left: 0; border-bottom: 0; border-radius: 0 3px 0 0; font: 11px/20px "Noto Sans", sans-serif; color: #666; white-space: nowrap; }

/* Taskbar */
.taskbar { flex: none; display: flex; height: 40px; background: linear-gradient(90deg, #1d1d33 30%, #2b2329 50%, #30292e 66%, #202836 73%, #262a20 85%, #1c1e1c); color: #fff; }
.start { width: 48px; display: grid; place-items: center; background: #1d1d20; }
.task-search { display: flex; align-items: center; gap: 11px; width: 343px; padding-left: 11px; background: #f2f2f2; border: 1px solid #bbb; border-left: 0; }
.task-search input { flex: 1; min-width: 0; font-size: 14px; color: #222; }
.task-search input::placeholder { color: #333; opacity: 1; }
.task { width: 50px; display: grid; place-items: center; border-left: 4px solid transparent; border-right: 4px solid transparent; }
.open { background: linear-gradient(#76b9ed, #76b9ed) bottom / 100% 2px no-repeat content-box; }
.active { border: 0; background-color: #555158; background-clip: border-box; }
.tray { display: flex; align-items: center; gap: 9px; margin-left: auto; padding-right: 4px; font-size: 12px; }
.pen { margin: 0 2px; }
.lang { margin-left: 4px; }
.clock { display: flex; flex-direction: column; align-items: center; gap: 2px; margin: 0 9px 0 4px; }
.notes { position: relative; border-right: 1px solid #777; height: 40px; padding-right: 13px; }
.notes span { position: absolute; left: 12px; top: 16px; width: 8px; font-size: 11px; line-height: 16px; text-align: center; }
```
